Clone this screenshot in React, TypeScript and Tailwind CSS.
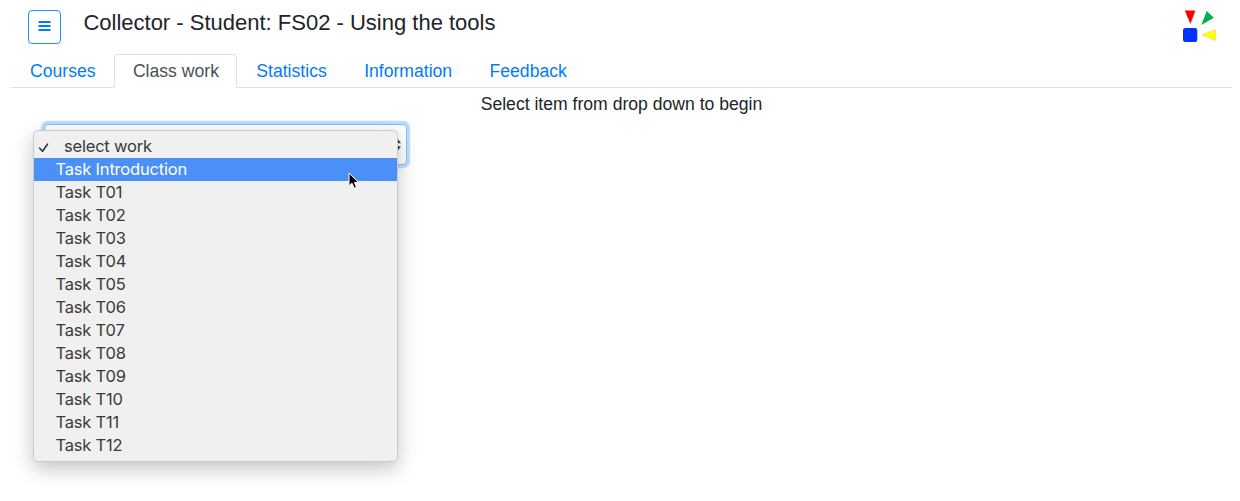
import React from "react";

const tabs = ["Courses", "Class work", "Statistics", "Information", "Feedback"];

const tasks = [
  "Task Introduction",
  "Task T01",
  "Task T02",
  "Task T03",
  "Task T04",
  "Task T05",
  "Task T06",
  "Task T07",
  "Task T08",
  "Task T09",
  "Task T10",
  "Task T11",
  "Task T12",
];

function Logo() {
  return (
    <svg className="mt-[9px] h-[36px] w-[36px]" viewBox="1182 9 36 36">
      <path d="M1184.8 10.5h10.6l-5 13.6z" fill="#fe0000" />
      <path d="M1206.7 11l7.2 6.8-12.6 7.2z" fill="#00b050" />
      <path d="M1201.5 34.9l14-5.4v11z" fill="#ffff00" stroke="#c9c96a" strokeWidth="0.4" />
      <rect x="1183" y="28" width="14.3" height="14" rx="2.2" fill="#0433ff" />
    </svg>
  );
}

function Header() {
  return (
    <header className="flex h-[54px] items-start pl-[28px] pr-[22px]">
      <button className="mt-[10px] flex h-[34px] w-[33px] items-start justify-center rounded-[4px] border border-[#288dff]" aria-label="Menu">
        <svg className="mt-[9px] h-[12px] w-[13px]" viewBox="0 0 13 12" stroke="#007bff" strokeWidth="2">
          <path d="M.5 2h12M.5 6h12M.5 10h12" />
        </svg>
      </button>
      <h1 className="ml-[22.4px] mt-[9px] whitespace-nowrap text-[22px] leading-[27px] text-[#212529]">
        Collector - Student: FS02 - Using the tools
      </h1>
      <div className="ml-auto">
        <Logo />
      </div>
    </header>
  );
}

function Tabs() {
  return (
    <nav className="ml-[11px] mr-[8px] flex h-[34px] border-b border-[#dee2e6] text-[17.6px]">
      {tabs.map((tab) => (
        <a
          key={tab}
          className={
            tab === "Class work"
              ? "h-[34px] whitespace-nowrap rounded-t-[4px] border border-[#dee2e6] border-b-white bg-white pl-[18px] pr-[17.4px] leading-[32px] text-[#495057]"
              : "h-[34px] whitespace-nowrap border border-transparent pl-[18px] pr-[17.4px] leading-[32px] text-[#007bff]"
          }
        >
          {tab}
        </a>
      ))}
    </nav>
  );
}

function Menu() {
  return (
    <div className="absolute -left-[12px] top-[5px] h-[332px] w-[365px] rounded-[5px] border border-[#cbcbcb] bg-[#f0f0f0] pt-[4px] font-['Inter',sans-serif] text-[16.5px] leading-[23px] tracking-[-0.2px] text-[#3a3a3a] shadow-[0_7px_20px_rgba(0,0,0,0.23)]">
      <div className="flex h-[23px] items-center">
        <svg className="ml-[4px] h-[12px] w-[12px]" viewBox="0 0 12 12" fill="none" stroke="#333" strokeWidth="1.6" strokeLinecap="round" strokeLinejoin="round">
          <path d="M1.7 7.2l2.8 3 5-7" />
        </svg>
        <span className="ml-[14px]">select work</span>
      </div>
      {tasks.map((task, i) => (
        <div
          key={task}
          className={i === 0 ? "h-[23px] bg-[#4a90f7] pl-[21.5px] text-white" : "h-[23px] pl-[21.5px]"}
        >
          {task}
        </div>
      ))}
      <svg className="absolute left-[314px] top-[41px] h-[18px] w-[12px]" viewBox="0 0 12 18">
        <path d="M1 1v13l3-2.8 2.2 5 2.3-1-2.1-4.8h4.1z" fill="#000" stroke="#fff" strokeWidth="1" />
      </svg>
    </div>
  );
}

export default function App() {
  return (
    <div className="h-[501px] overflow-hidden bg-white font-['Liberation_Sans',Arial,sans-serif] text-[17.6px] text-[#212529]">
      <Header />
      <Tabs />
      <p className="mt-[3px] h-[26px] pl-[3px] text-center leading-[26px]">Select item from drop down to begin</p>
      <div className="relative ml-[44px] mt-[7px] h-[41px] w-[363px] rounded-[4px] border border-[#80bdff] bg-white shadow-[0_0_0_3.2px_#bfdeff]">
        <svg className="absolute right-[5px] top-[12px] h-[16px] w-[9px]" viewBox="0 0 9 16" fill="#343a40">
          <path d="M0 6.3L4.5 0 9 6.3zM0 9.3h9L4.5 15.6z" />
        </svg>
        <Menu />
      </div>
    </div>
  );
}
